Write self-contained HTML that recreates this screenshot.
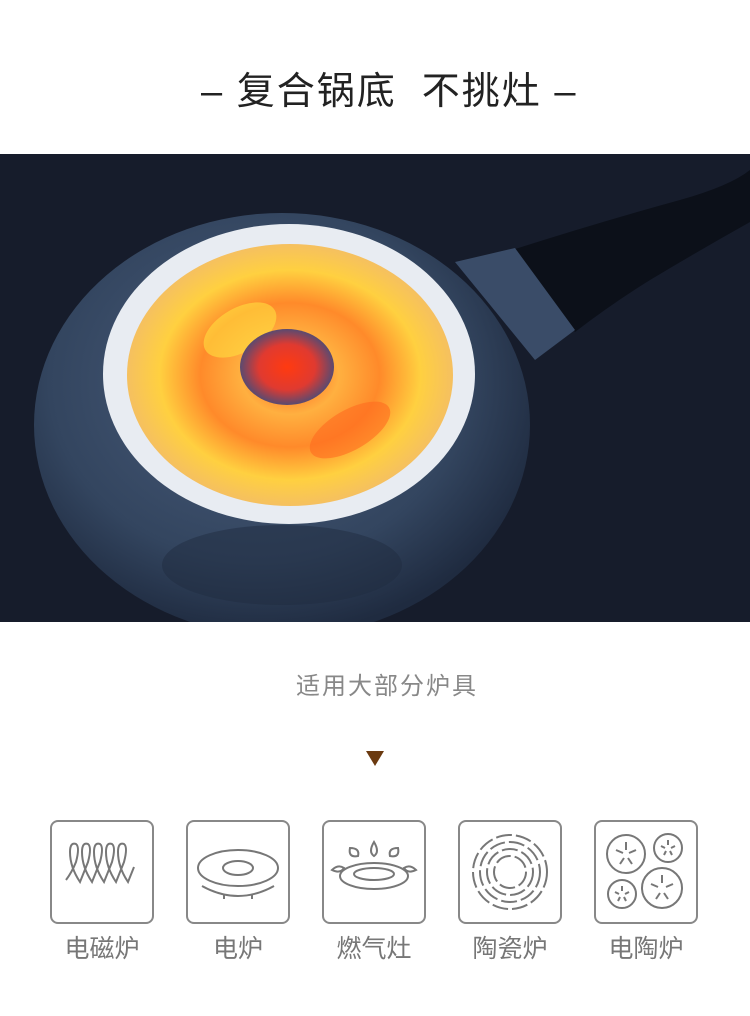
<!DOCTYPE html>
<html><head><meta charset="utf-8"><style>
body{margin:0;width:750px;height:1016px;background:#fff;position:relative;overflow:hidden;font-family:"Liberation Sans","Noto Sans CJK SC",sans-serif}
.t{position:absolute;top:60px;left:201px;white-space:nowrap;font-size:38px;color:#222;letter-spacing:2px}
.s{position:absolute;top:666px;left:296px;white-space:nowrap;font-size:24px;color:#888;letter-spacing:2px}
.tri{position:absolute;left:366px;top:751px;width:0;height:0;border-left:9px solid transparent;border-right:9px solid transparent;border-top:15px solid #6b3a10}
.box{position:absolute;top:820px;width:100px;height:100px;border:2px solid #888;border-radius:8px}
.lb{position:absolute;top:929px;width:104px;text-align:center;font-size:25px;color:#777}
</style></head><body>
<div class="t">– 复合锅底&nbsp;&nbsp;不挑灶 –</div>
<svg style="position:absolute;left:0;top:154px" width="750" height="468" viewBox="0 154 750 468">
<defs>
<radialGradient id="pb" cx="0.45" cy="0.4" r="0.6"><stop offset="0" stop-color="#4a5d7c"/><stop offset="0.7" stop-color="#33455f"/><stop offset="1" stop-color="#1f2b40"/></radialGradient>
<radialGradient id="fl" cx="0.5" cy="0.5" r="0.5"><stop offset="0" stop-color="#ff5a20"/><stop offset="0.3" stop-color="#ffb040"/><stop offset="0.55" stop-color="#ff8a2a"/><stop offset="0.8" stop-color="#ffd040"/><stop offset="1" stop-color="#f5c060"/></radialGradient>
<radialGradient id="rd" cx="0.5" cy="0.5" r="0.5"><stop offset="0" stop-color="#ff3a10"/><stop offset="0.6" stop-color="#e03a30"/><stop offset="1" stop-color="#5a4a70"/></radialGradient>
</defs>
<rect x="0" y="154" width="750" height="468" fill="#161c2b"/>
<path d="M512 250 Q600 222 680 200 Q730 186 750 170 L750 222 Q700 250 650 280 Q610 305 575 332 Z" fill="#0c1019"/>
<path d="M455 262 L515 248 L575 330 L535 360 Z" fill="#3a4c68"/>
<ellipse cx="282" cy="425" rx="248" ry="212" fill="url(#pb)"/>
<ellipse cx="282" cy="565" rx="120" ry="40" fill="#1f2b40" opacity="0.5"/>
<ellipse cx="289" cy="374" rx="186" ry="150" fill="#e8ecf2"/>
<ellipse cx="290" cy="375" rx="163" ry="131" fill="url(#fl)"/>
<ellipse cx="240" cy="330" rx="40" ry="22" fill="#ffe040" opacity="0.6" transform="rotate(-30 240 330)"/>
<ellipse cx="350" cy="430" rx="45" ry="20" fill="#ff6a20" opacity="0.6" transform="rotate(-30 350 430)"/>
<ellipse cx="287" cy="367" rx="47" ry="38" fill="url(#rd)"/>
</svg>
<div class="s">适用大部分炉具</div>
<div class="tri"></div>
<div class="box" style="left:50px"><svg width="100" height="100" fill="none" stroke="#777" stroke-width="2">
<path d="M14 58 Q20 50 24 40 Q28 25 24 22 Q18 20 18 30 Q18 45 28 60 Q32 50 36 40 Q40 25 36 22 Q30 20 30 30 Q30 45 40 60 Q44 50 48 40 Q52 25 48 22 Q42 20 42 30 Q42 45 52 60 Q56 50 60 40 Q64 25 60 22 Q54 20 54 30 Q54 45 64 60 Q68 50 72 40 Q76 25 72 22 Q66 20 66 30 Q66 45 76 60 Q80 50 82 45"/></svg></div>
<div class="lb" style="left:50px">电磁炉</div>
<div class="box" style="left:186px"><svg width="100" height="100" fill="none" stroke="#777" stroke-width="2">
<ellipse cx="50" cy="46" rx="40" ry="18"/><ellipse cx="50" cy="46" rx="15" ry="7"/><path d="M14 64 Q50 84 86 64"/><path d="M36 72 v5 M64 72 v5"/></svg></div>
<div class="lb" style="left:186px">电炉</div>
<div class="box" style="left:322px"><svg width="100" height="100" fill="none" stroke="#777" stroke-width="2">
<ellipse cx="50" cy="54" rx="34" ry="13"/><ellipse cx="50" cy="52" rx="20" ry="6"/><path d="M50 20 Q44 30 50 34 Q56 30 50 20Z M26 26 Q24 36 34 34 Q36 26 26 26Z M74 26 Q76 36 66 34 Q64 26 74 26Z M8 48 Q14 42 20 46 Q16 52 8 48Z M92 48 Q86 42 80 46 Q84 52 92 48Z"/></svg></div>
<div class="lb" style="left:322px">燃气灶</div>
<div class="box" style="left:458px"><svg width="100" height="100" fill="none" stroke="#777" stroke-width="2" stroke-dasharray="16 4">
<circle cx="50" cy="50" r="37"/><circle cx="50" cy="50" r="30"/><circle cx="50" cy="50" r="23"/><circle cx="50" cy="50" r="16"/></svg></div>
<div class="lb" style="left:458px">陶瓷炉</div>
<div class="box" style="left:594px"><svg width="100" height="100" fill="none" stroke="#777" stroke-width="2">
<circle cx="30" cy="32" r="19"/><circle cx="72" cy="26" r="14"/><circle cx="26" cy="72" r="14"/><circle cx="66" cy="66" r="20"/>
<path d="M30 20v8 M20 28l7 3 M40 28l-7 3 M24 42l4-6 M36 42l-4-6 M72 18v5 M65 24l4 2 M79 24l-4 2 M68 33l2-4 M76 33l-2-4 M26 64v5 M19 70l4 2 M33 70l-4 2 M22 79l2-4 M30 79l-2-4 M66 53v8 M55 62l7 3 M77 62l-7 3 M60 77l4-6 M72 77l-4-6"/></svg></div>
<div class="lb" style="left:594px">电陶炉</div>
</body></html>
